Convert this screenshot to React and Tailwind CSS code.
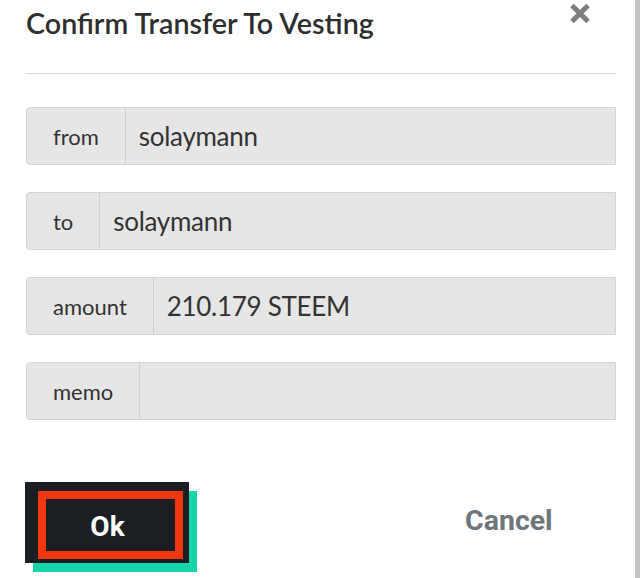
import React from 'react'

const rows = [
  { label: 'from', value: 'solaymann' },
  { label: 'to', value: 'solaymann' },
  { label: 'amount', value: '210.179 STEEM' },
  { label: 'memo', value: '' },
]

export default function App() {
  return (
    <div className="w-[640px] h-[578px] flex bg-white overflow-hidden" style={{ fontFamily: 'Lato, "Noto Sans", sans-serif' }}>
      <div className="flex-1 pl-[26px] pr-[19px] pt-[3px]">
        {/* Header */}
        <div className="flex items-start justify-between">
          <h2 className="mt-[3px] text-[28.7px] leading-[34px] font-semibold text-[#2e2e2e]">
            Confirm Transfer To Vesting
          </h2>
          <svg width="22" height="21" viewBox="0 0 22 21" className="mr-[25px]">
            <path d="M3 2.5 L19 18.5 M19 2.5 L3 18.5" stroke="#7d7d7d" strokeWidth="5" />
          </svg>
        </div>
        <div className="mt-[33px] border-t border-[#d8d8d8]" />

        {/* Fields */}
        <div className="mt-[33px] flex flex-col gap-[27px]">
          {rows.map((r) => (
            <div key={r.label} className="h-[58px] flex border border-[#d4d4d4] rounded-l-[4px] bg-[#e6e6e6] text-[#333]">
              <div className="flex items-center px-[26px] border-r border-[#d0d0d0] text-[22px]">
                {r.label}
              </div>
              <div className="flex-1 flex items-center pl-[13px] text-[26px] tracking-[-0.3px]">
                {r.value}
              </div>
            </div>
          ))}
        </div>

        {/* Footer */}
        <div className="mt-[62px] flex items-start -ml-px" style={{ fontFamily: 'Roboto, sans-serif' }}>
          <button className="w-[164px] h-[81px] bg-[#1b1f23] shadow-[8px_9px_0_#16d4ac] pl-[13px] pt-[5px] text-left">
            <div className="w-[145px] h-[68px] border-[8px] border-[#f2360d] flex items-center justify-center pr-[6px] pt-[3px] text-white text-[28px] font-bold">
              Ok
            </div>
          </button>
          <button className="ml-[276px] mt-[22px] text-[28.5px] font-bold text-[#6e757b] leading-[34px]">
            Cancel
          </button>
        </div>
      </div>
      <div className="w-[5px] h-full bg-[#c2c2c2]" />
    </div>
  )
}
